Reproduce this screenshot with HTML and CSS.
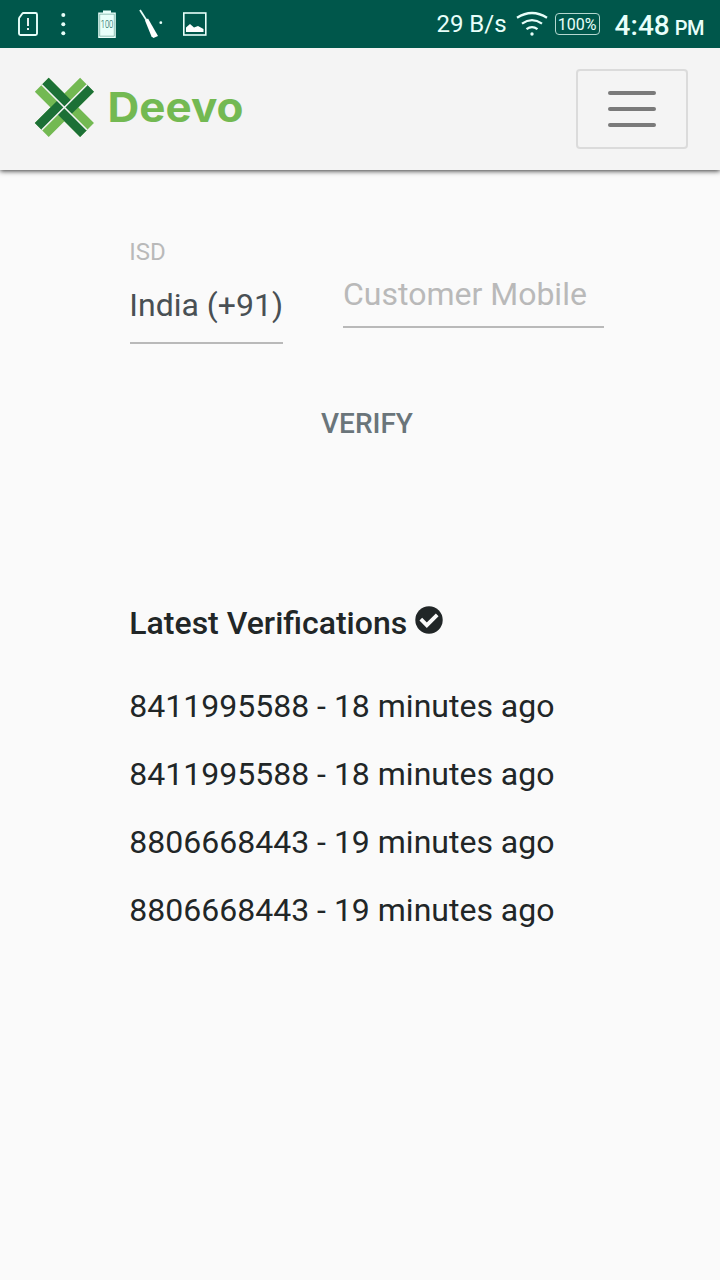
FILE: index.html
```html
<!DOCTYPE html>
<html lang="en">

<head>
    <meta charset="UTF-8">
    <meta name="viewport" content="width=device-width, initial-scale=1.0">
    <title>Deevo</title>
    <link rel="stylesheet" href="styles.css">
</head>

<body>
    <div class="status-bar">
        <svg class="status-icons" width="230" height="48" viewBox="0 0 230 48">
            <!-- SIM card -->
            <path d="M23.5 13H35.5Q37 13 37 14.5V33.5Q37 35 35.5 35H20.5Q19 35 19 33.5V19Q19 18 19.7 17.2L22 14Q22.7 13 23.5 13Z" fill="none" stroke="#e8fffa" stroke-width="1.9"/>
            <path d="M28 18V26M28 28V30" stroke="#fff" stroke-width="1.8"/>
            <!-- Dots -->
            <g fill="#e8fffa">
                <circle cx="63.3" cy="15" r="2"/>
                <circle cx="63.3" cy="24.3" r="2"/>
                <circle cx="63.3" cy="33.3" r="2"/>
            </g>
            <!-- Battery -->
            <path d="M103 10.5H111V12.5H115.8V38H98.2V12.5H103Z" fill="#e8fffa"/>
            <path d="M99.7 14.2H114.3V36.2H99.7Z" fill="none" stroke="#5d9a8c" stroke-width=".6"/>
            <text class="battery-text" x="107" y="27.5" text-anchor="middle" textLength="12.5" lengthAdjust="spacingAndGlyphs">100</text>
            <!-- Screwdriver -->
            <path d="M140 10L147 21" stroke="#e8fffa" stroke-width="1.8"/>
            <path d="M145 20.5L148 18.5L158 36L153.5 38L151.5 36.5Z" fill="#fff"/>
            <circle cx="160.8" cy="22.7" r="1.4" fill="#e8fffa"/>
            <!-- Picture -->
            <rect x="183.8" y="13" width="22" height="22" fill="none" stroke="#e8fffa" stroke-width="1.6"/>
            <path d="M186 32V27.5L190 24L194 27.5L198 26L203.5 29V32Z" fill="#fff"/>
        </svg>
        <div class="status-right">
            <span class="speed">29 B/s</span>
            <svg class="wifi" width="32" height="26" viewBox="0 0 32 26">
                <g fill="none" stroke="#e8fffa" stroke-width="2.3">
                    <path d="M1 6.8Q16-2.8 31 6.8"/>
                    <path d="M6 12.6Q16 5.6 26 12.6"/>
                    <path d="M10.5 18.2Q16 14 21.5 18.2"/>
                </g>
                <circle cx="16" cy="23" r="1.7" fill="#e8fffa"/>
            </svg>
            <span class="percent">100%</span>
            <span class="clock">4:48</span>
            <span class="meridiem">PM</span>
        </div>
    </div>

    <nav class="navbar">
        <svg class="logo" width="220" height="80" viewBox="0 0 220 80">
            <g transform="translate(32.4 38.4) rotate(45)">
                <path d="M-9.8-32H9.8V32H-9.8ZM-32-9.8H32V9.8H-32Z" fill="#73b952"/>
                <path d="M-32-9.8H0V0H-32ZM0 0H32V9.8H0ZM-9.8 0H0V32H-9.8ZM0-32H9.8V0H0Z" fill="#1c7036"/>
                <path d="M-32 0H32M0-32V32" stroke="#f4f4f4" stroke-width="1.6"/>
            </g>
            <text class="brand" x="75.5" y="53" textLength="136" lengthAdjust="spacingAndGlyphs">Deevo</text>
        </svg>
        <button class="toggler" type="button" aria-label="Menu">
            <span></span>
            <span></span>
            <span></span>
        </button>
    </nav>

    <main class="content">
        <form class="verify-form">
            <div class="fields">
                <div class="isd">
                    <span class="isd-label">ISD</span>
                    <span class="isd-value">India (+91)</span>
                </div>
                <input class="mobile" type="tel" placeholder="Customer Mobile">
            </div>
            <button class="verify" type="button">VERIFY</button>
        </form>

        <section class="latest">
            <h2>Latest Verifications
                <svg class="check" width="28" height="28" viewBox="0 0 28 28">
                    <circle cx="14" cy="14" r="13.7" fill="#212627"/>
                    <path d="M5.8 13.2L11.8 19.2L22.2 8.8" fill="none" stroke="#fafafa" stroke-width="3.8"/>
                </svg>
            </h2>
            <p>8411995588 - 18 minutes ago</p>
            <p>8411995588 - 18 minutes ago</p>
            <p>8806668443 - 19 minutes ago</p>
            <p>8806668443 - 19 minutes ago</p>
        </section>
    </main>
</body>

</html>
```

FILE: styles.css
```css
* {
    box-sizing: border-box;
}

body {
    margin: 0;
    min-height: 1280px;
    background: #fafafa;
    color: #212627;
    font-family: Roboto, sans-serif;
    font-size: 32px;
}

/* Status bar */
.status-bar {
    position: relative;
    z-index: 1;
    display: flex;
    justify-content: space-between;
    height: 48px;
    background: #00574b;
    color: #e8fffa;
}

.status-right {
    display: flex;
    align-items: center;
    padding-right: 16px;
    white-space: nowrap;
}

.speed {
    font-size: 24px;
    line-height: 50px;
    margin-right: 9px;
}

.wifi {
    margin-right: 7px;
}

.percent {
    width: 45px;
    height: 22px;
    border: 1px solid #b5d8d0;
    border-radius: 4px;
    font-size: 16px;
    line-height: 21px;
    text-align: center;
    margin-right: 15px;
}

.clock {
    font-size: 28px;
    font-weight: 500;
    line-height: 48px;
    padding-top: 3px;
    margin-right: 5px;
}

.meridiem {
    font-size: 20px;
    font-weight: 500;
    letter-spacing: -0.5px;
    padding-top: 8px;
}

.battery-text {
    font-size: 10px;
    font-weight: 300;
    fill: #00574b;
}

/* Navbar */
.navbar {
    display: flex;
    align-items: center;
    justify-content: space-between;
    height: 122px;
    padding: 0 32px;
    background: #f4f4f4;
    box-shadow: 0 1px 5px rgba(0, 0, 0, 0.8);
}

.brand {
    font-family: Inter, sans-serif;
    font-size: 41px;
    font-weight: 700;
    fill: #73b952;
}

.toggler {
    display: flex;
    flex-direction: column;
    align-items: center;
    justify-content: center;
    gap: 12px;
    width: 112px;
    height: 80px;
    padding: 0;
    background: transparent;
    border: 2px solid #dbdbdb;
    border-radius: 4px;
}

.toggler span {
    width: 48px;
    height: 4px;
    border-radius: 2px;
    background: #7a7a7a;
}

/* Form */
.content {
    padding: 68px 116px 0 130px;
}

.verify-form {
    display: flex;
    flex-direction: column;
}

.fields {
    display: flex;
    align-items: flex-start;
    gap: 60px;
}

.isd {
    display: flex;
    flex-direction: column;
    width: 153px;
    height: 106px;
    border-bottom: 2px solid #b9b9b9;
    text-indent: -0.7px;
    white-space: nowrap;
}

.isd-label {
    color: #b9b9b9;
    font-size: 24px;
    line-height: 28px;
}

.isd-value {
    color: #495054;
    line-height: 38px;
    margin-top: 20px;
}

.mobile {
    width: 261px;
    height: 66px;
    margin-top: 24px;
    padding: 0;
    border: none;
    border-bottom: 2px solid #b9b9b9;
    background: transparent;
    font-family: inherit;
    font-size: 32px;
}

.mobile::placeholder {
    color: #b9b9b9;
}

.verify {
    align-self: center;
    margin-top: 62px;
    padding: 0;
    border: none;
    background: transparent;
    color: #6a757a;
    font-family: inherit;
    font-size: 28px;
    font-weight: 500;
    line-height: 36px;
}

/* Latest verifications */
.latest {
    padding-top: 162px;
    text-indent: -0.7px;
}

.latest h2 {
    display: flex;
    gap: 7.5px;
    margin: 0 0 45px;
    font-size: 32px;
    font-weight: 500;
    line-height: 38px;
}

.check {
    margin-top: 2px;
}

.latest p {
    margin: 0 0 30px;
    line-height: 38px;
    white-space: nowrap;
}
```
